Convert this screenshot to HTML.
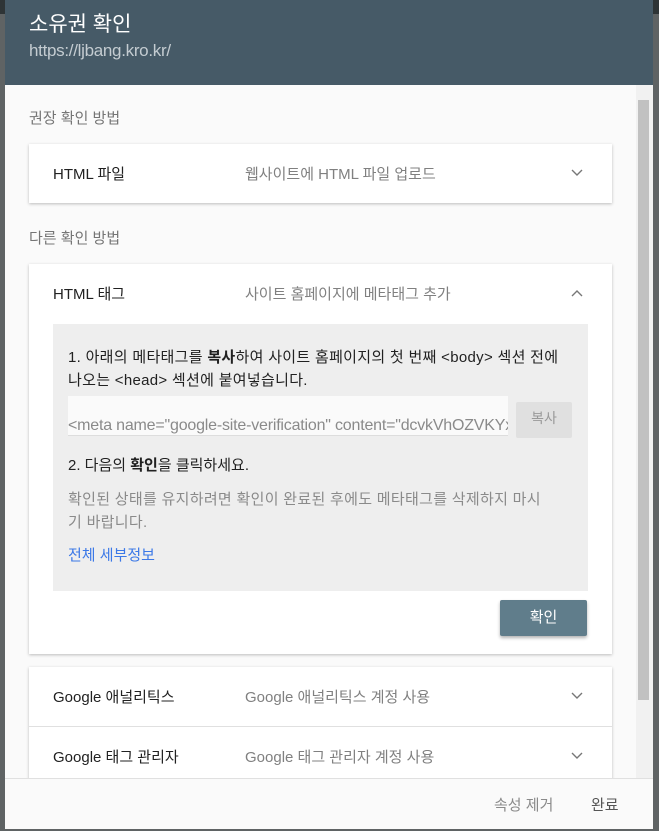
<!DOCTYPE html>
<html><head><meta charset="utf-8"><style>
*{box-sizing:border-box;margin:0;padding:0}
body{width:659px;height:831px;overflow:hidden;background:#5f6364;font-family:"Liberation Sans","Noto Sans CJK KR",sans-serif;position:relative}
.dlg{position:absolute;left:5px;top:0;width:648px;height:829px;background:#fafafa;overflow:hidden}
.hd{height:85px;background:#465a67;padding:11px 0 0 24px}
.hd h1{font-size:21px;font-weight:normal;color:#fff;line-height:28px}
.hd p{font-size:17px;color:#c4ccd1;line-height:24px;letter-spacing:-0.3px}
.sec{position:absolute;left:24px;font-size:15px;color:#757575}
.card{position:absolute;left:24px;width:583px;background:#fff;box-shadow:0 1px 3px rgba(0,0,0,.25)}
.row{height:59px;position:relative;font-size:15px}
.row .a{position:absolute;left:24px;top:19px;color:#212121}
.row .b{position:absolute;left:216px;top:19px;color:#808080}
.row svg{position:absolute;right:29px;top:25px}
.panel{position:absolute;left:24px;top:60px;width:535px;height:267px;background:#eeeeee;padding:22px 15px 0 15px;font-size:15px;color:#212121;line-height:23px;white-space:nowrap}
.inp{position:absolute;left:15px;top:72px;width:440px;height:40px;background:#fafafa;border-bottom:1px solid #ddd;color:#8a8a8a;font-size:16px;padding-top:18px;white-space:nowrap;overflow:hidden;letter-spacing:-0.2px}
.copy{position:absolute;left:463px;top:78px;width:56px;height:36px;background:#e0e0e0;border-radius:2px;color:#999;font-size:14px;text-align:center;line-height:32px}
.btn{position:absolute;left:471px;top:336px;width:87px;height:36px;background:#607d8b;color:#fff;border-radius:2px;text-align:center;line-height:36px;font-size:15px;box-shadow:0 2px 3px rgba(0,0,0,.3)}
.ft{position:absolute;left:0;top:778px;width:648px;height:51px;background:#fafafa;border-top:1px solid #e0e0e0;font-size:15px}
.sb{position:absolute;left:631px;top:85px;width:17px;height:693px;background:#f1f1f1}
.th{position:absolute;left:2px;top:15px;width:11px;height:600px;background:#c1c1c1}
</style></head><body>
<div style="position:absolute;left:0;top:0;width:659px;height:14px;background:#2e3436"></div>
<div class="dlg">
<div class="hd"><h1>소유권 확인</h1><p>https://ljbang.kro.kr/</p></div>
<div class="sec" style="top:107px">권장 확인 방법</div>
<div class="card" style="top:144px"><div class="row"><span class="a">HTML 파일</span><span class="b">웹사이트에 HTML 파일 업로드</span><svg width="12" height="8"><path d="M1 1l5 5 5-5" stroke="#777" stroke-width="1.4" fill="none"/></svg></div></div>
<div class="sec" style="top:227px">다른 확인 방법</div>
<div class="card" style="top:264px;height:390px"><div class="row"><span class="a">HTML 태그</span><span class="b">사이트 홈페이지에 메타태그 추가</span><svg width="12" height="8"><path d="M1 7l5-5 5 5" stroke="#777" stroke-width="1.4" fill="none"/></svg></div>
<div class="panel">
<div style="letter-spacing:0.3px">1. 아래의 메타태그를 <b>복사</b>하여 사이트 홈페이지의 첫 번째 &lt;body&gt; 섹션 전에<br>나오는 &lt;head&gt; 섹션에 붙여넣습니다.</div>
<div class="inp">&lt;meta name="google-site-verification" content="dcvkVhOZVKYx</div>
<div class="copy">복사</div>
<div style="position:absolute;left:15px;top:130px">2. 다음의 <b>확인</b>을 클릭하세요.</div>
<div style="position:absolute;left:15px;top:164px;color:#8a8a8a;letter-spacing:0.3px">확인된 상태를 유지하려면 확인이 완료된 후에도 메타태그를 삭제하지 마시<br>기 바랍니다.</div>
<div style="position:absolute;left:15px;top:220px;color:#3b78e7">전체 세부정보</div>
</div>
<div class="btn">확인</div>
</div>
<div class="card" style="top:667px"><div class="row"><span class="a">Google 애널리틱스</span><span class="b">Google 애널리틱스 계정 사용</span><svg width="12" height="8"><path d="M1 1l5 5 5-5" stroke="#777" stroke-width="1.4" fill="none"/></svg></div>
<div class="row" style="border-top:1px solid #e0e0e0"><span class="a">Google 태그 관리자</span><span class="b">Google 태그 관리자 계정 사용</span><svg width="12" height="8"><path d="M1 1l5 5 5-5" stroke="#777" stroke-width="1.4" fill="none"/></svg></div></div>
<div class="sb"><div class="th"></div></div>
<div class="ft"><span style="position:absolute;left:489px;top:15px;color:#8a8a8a">속성 제거</span><span style="position:absolute;left:586px;top:15px;color:#555">완료</span></div>
</div>
</body></html>
